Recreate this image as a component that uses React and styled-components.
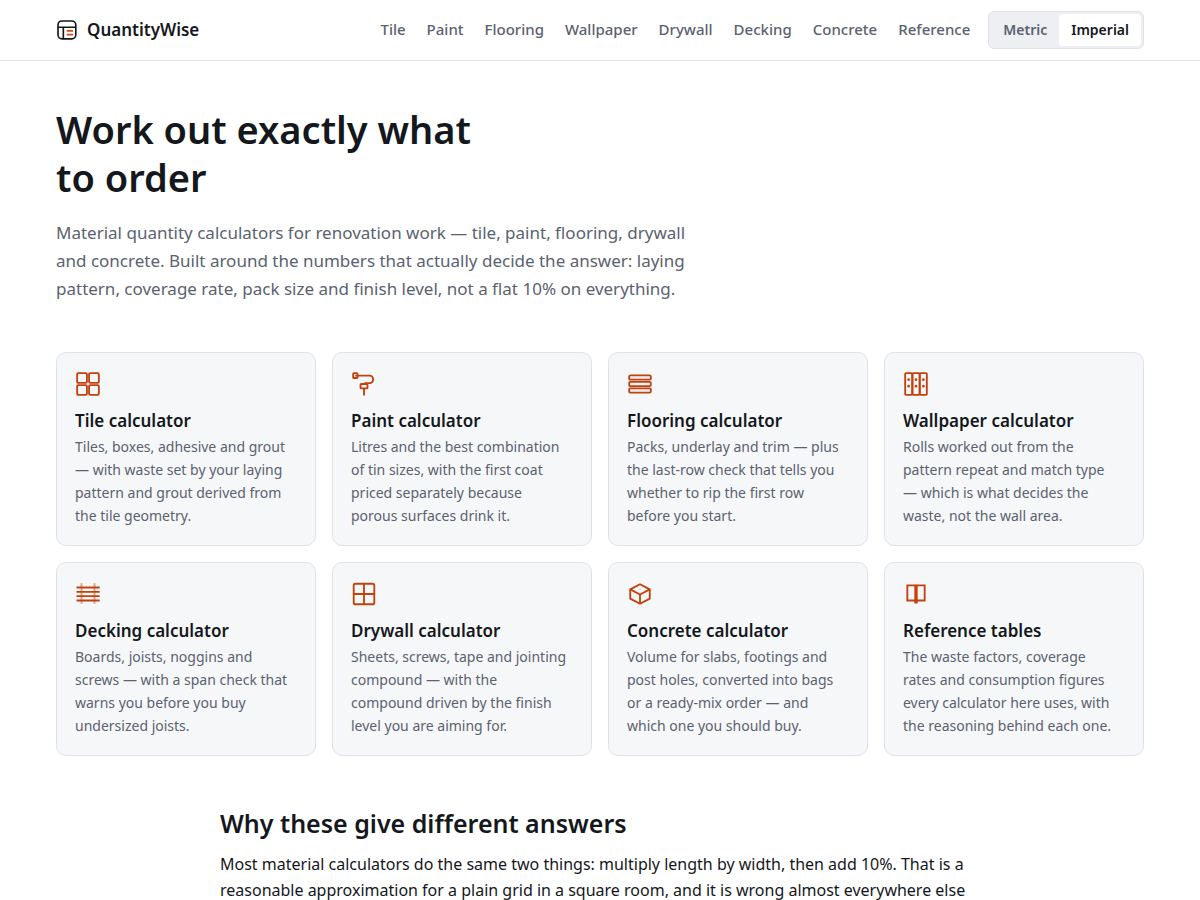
import React, { useState } from 'react'
import styled, { createGlobalStyle } from 'styled-components'

const GlobalStyle = createGlobalStyle`
  * {
    box-sizing: border-box;
  }

  body {
    margin: 0;
    background: #ffffff;
    color: #14171c;
    font-family: 'Noto Sans', sans-serif;
    font-size: 16px;
    line-height: 26px;
  }
`

const Header = styled.header`
  border-bottom: 1px solid #dfe2e7;
`

const HeaderInner = styled.div`
  display: flex;
  align-items: center;
  justify-content: space-between;
  gap: 18px;
  max-width: 1136px;
  min-height: 60px;
  margin: 0 auto;
  padding: 8px 24px;
`

const Brand = styled.a`
  display: flex;
  align-items: center;
  gap: 9px;
  color: #14171c;
  font-size: 17px;
  font-weight: 600;
  text-decoration: none;
`

const HeaderSide = styled.div`
  display: flex;
  align-items: center;
  gap: 18px;
`

const Nav = styled.nav`
  display: flex;
  flex-wrap: wrap;
  gap: 4px 21px;
  padding-bottom: 2px;
`

const NavLink = styled.a`
  color: #5a6270;
  font-size: 15px;
  font-weight: 500;
  line-height: 26px;
  text-decoration: none;

  &:hover {
    color: #14171c;
  }
`

const UnitToggle = styled.div`
  display: flex;
  padding: 2px;
  border: 1px solid #dfe2e8;
  border-radius: 6px;
  background: #edeff3;
`

const UnitButton = styled.button`
  padding: 5px 12px;
  border: 0;
  border-radius: 4px;
  background: ${({ $active }) => ($active ? '#ffffff' : 'transparent')};
  color: ${({ $active }) => ($active ? '#14171c' : '#5a6270')};
  font-family: inherit;
  font-size: 14px;
  font-weight: 600;
  line-height: 22px;
  cursor: pointer;
`

const Main = styled.main`
  max-width: 1136px;
  margin: 0 auto;
  padding: 44px 24px 64px;
`

const Title = styled.h1`
  max-width: 440px;
  margin: 0 0 18px;
  font-size: 38px;
  font-weight: 600;
  line-height: 48px;
`

const Lede = styled.p`
  max-width: 650px;
  margin: 0 0 49px;
  color: #5a6270;
  font-size: 17px;
  line-height: 28px;
`

const CardGrid = styled.div`
  display: grid;
  grid-template-columns: repeat(auto-fill, minmax(240px, 1fr));
  gap: 16px;
`

const Card = styled.a`
  padding: 18px;
  border: 1px solid #dfe2e8;
  border-radius: 10px;
  background: #f6f7f9;
  color: #14171c;
  text-decoration: none;

  &:hover {
    border-color: #c2410c;
  }
`

const CardIcon = styled.svg`
  display: block;
  width: 26px;
  height: 26px;
  margin-bottom: 10px;
  color: #c2410c;
`

const CardTitle = styled.h2`
  margin: 0;
  font-size: 17px;
  font-weight: 600;
  line-height: 28px;
`

const CardText = styled.p`
  margin: 0;
  padding-right: 5px;
  color: #5a6270;
  font-size: 14px;
  line-height: 23px;
`

const Prose = styled.section`
  max-width: 760px;
  margin: 49px auto 0;
`

const ProseTitle = styled.h2`
  margin: 0 0 10px;
  font-size: 25px;
  font-weight: 600;
  line-height: 36px;
`

const ProseText = styled.p`
  margin: 0 0 16px;
`

const links = ['Tile', 'Paint', 'Flooring', 'Wallpaper', 'Drywall', 'Decking', 'Concrete', 'Reference']

const units = ['Metric', 'Imperial']

const cards = [
  {
    id: 'tile',
    title: 'Tile calculator',
    text: 'Tiles, boxes, adhesive and grout — with waste set by your laying pattern and grout derived from the tile geometry.',
    icon: (
      <>
        <rect x="2" y="2" width="9" height="9" rx="1" />
        <rect x="13" y="2" width="9" height="9" rx="1" />
        <rect x="2" y="13" width="9" height="9" rx="1" />
        <rect x="13" y="13" width="9" height="9" rx="1" />
      </>
    )
  },
  {
    id: 'paint',
    title: 'Paint calculator',
    text: 'Litres and the best combination of tin sizes, with the first coat priced separately because porous surfaces drink it.',
    icon: (
      <>
        <rect x="2" y="2" width="4" height="4.5" rx="0.6" />
        <path d="M4 4.2h13.2A3.2 3.2 0 0 1 20.4 7.4v.6a3.2 3.2 0 0 1-3.2 3.2H13.5a1.5 1.5 0 0 0-1.5 1.2" />
        <rect x="8.8" y="12" width="6.4" height="4" rx="0.6" />
        <path d="M12 16v6.6" />
      </>
    )
  },
  {
    id: 'flooring',
    title: 'Flooring calculator',
    text: 'Packs, underlay and trim — plus the last-row check that tells you whether to rip the first row before you start.',
    icon: (
      <>
        <rect x="2" y="4" width="20" height="4" rx="1" />
        <rect x="2" y="10" width="20" height="4" rx="1" />
        <rect x="2" y="16" width="20" height="4" rx="1" />
      </>
    )
  },
  {
    id: 'wallpaper',
    title: 'Wallpaper calculator',
    text: 'Rolls worked out from the pattern repeat and match type — which is what decides the waste, not the wall area.',
    icon: (
      <>
        <rect x="2" y="2" width="6.5" height="20" rx="0.8" />
        <rect x="8.8" y="2" width="6.5" height="20" rx="0.8" />
        <rect x="15.5" y="2" width="6.5" height="20" rx="0.8" />
        <g fill="currentColor" stroke="none">
          <circle cx="5.2" cy="8" r="1.2" />
          <circle cx="12" cy="8" r="1.2" />
          <circle cx="18.8" cy="8" r="1.2" />
          <circle cx="5.2" cy="14" r="1.2" />
          <circle cx="12" cy="14" r="1.2" />
          <circle cx="18.8" cy="14" r="1.2" />
        </g>
      </>
    )
  },
  {
    id: 'decking',
    title: 'Decking calculator',
    text: 'Boards, joists, noggins and screws — with a span check that warns you before you buy undersized joists.',
    icon: (
      <>
        <path d="M6 2v19M18 2v19" opacity="0.5" />
        <path d="M1.4 6h21.4M1.4 10h21.4M1.4 14h21.4M1.4 18h21.4" />
      </>
    )
  },
  {
    id: 'drywall',
    title: 'Drywall calculator',
    text: 'Sheets, screws, tape and jointing compound — with the compound driven by the finish level you are aiming for.',
    icon: (
      <>
        <rect x="2.5" y="2.5" width="19" height="19" rx="1.5" />
        <path d="M12 2.5v19M2.5 12h19" />
      </>
    )
  },
  {
    id: 'concrete',
    title: 'Concrete calculator',
    text: 'Volume for slabs, footings and post holes, converted into bags or a ready-mix order — and which one you should buy.',
    icon: (
      <>
        <path d="M12 3l9 4.7v8.6L12 21l-9-4.7V7.7z" />
        <path d="M3 7.7l9 4.8 9-4.8M12 12.5V21" />
      </>
    )
  },
  {
    id: 'reference',
    title: 'Reference tables',
    text: 'The waste factors, coverage rates and consumption figures every calculator here uses, with the reasoning behind each one.',
    icon: (
      <>
        <path d="M4 4h7.3v14H4z" />
        <path d="M12.7 4H20v14h-7.3z" />
        <path d="M11.3 18v2h1.4v-2" />
      </>
    )
  }
]

const Logo = () => (
  <svg width="22" height="22" viewBox="0 0 24 24" fill="none" stroke="#14171c" strokeWidth="1.8" aria-hidden="true">
    <rect x="2.2" y="2.2" width="19.4" height="19.4" rx="4.4" />
    <path d="M2.2 9h19.4M8 9v12.6" />
    <path d="M11.7 13h6.8M11.7 17h6.8" stroke="#d9480f" />
  </svg>
)

const App = () => {
  const [unit, setUnit] = useState('Imperial')

  return (
    <>
      <GlobalStyle />
      <Header>
        <HeaderInner>
          <Brand href="#home">
            <Logo />
            QuantityWise
          </Brand>
          <HeaderSide>
            <Nav aria-label="Calculators">
              {links.map((link) => (
                <NavLink key={link} href={`#${link.toLowerCase()}`}>{link}</NavLink>
              ))}
            </Nav>
            <UnitToggle role="group" aria-label="Units">
              {units.map((name) => (
                <UnitButton
                  key={name}
                  type="button"
                  $active={unit === name}
                  aria-pressed={unit === name}
                  onClick={() => setUnit(name)}
                >
                  {name}
                </UnitButton>
              ))}
            </UnitToggle>
          </HeaderSide>
        </HeaderInner>
      </Header>

      <Main>
        <Title>Work out exactly what to order</Title>
        <Lede>
          Material quantity calculators for renovation work — tile, paint, flooring, drywall and
          concrete. Built around the numbers that actually decide the answer: laying pattern,
          coverage rate, pack size and finish level, not a flat 10% on everything.
        </Lede>

        <CardGrid>
          {cards.map((card) => (
            <Card key={card.id} href={`#${card.id}`}>
              <CardIcon viewBox="0 0 24 24" fill="none" stroke="currentColor" strokeWidth="1.7" aria-hidden="true">
                {card.icon}
              </CardIcon>
              <CardTitle>{card.title}</CardTitle>
              <CardText>{card.text}</CardText>
            </Card>
          ))}
        </CardGrid>

        <Prose>
          <ProseTitle>Why these give different answers</ProseTitle>
          <ProseText>
            Most material calculators do the same two things: multiply length by width, then add
            10%. That is a reasonable approximation for a plain grid in a square room, and it is
            wrong almost everywhere else
          </ProseText>
        </Prose>
      </Main>
    </>
  )
}

export default App
